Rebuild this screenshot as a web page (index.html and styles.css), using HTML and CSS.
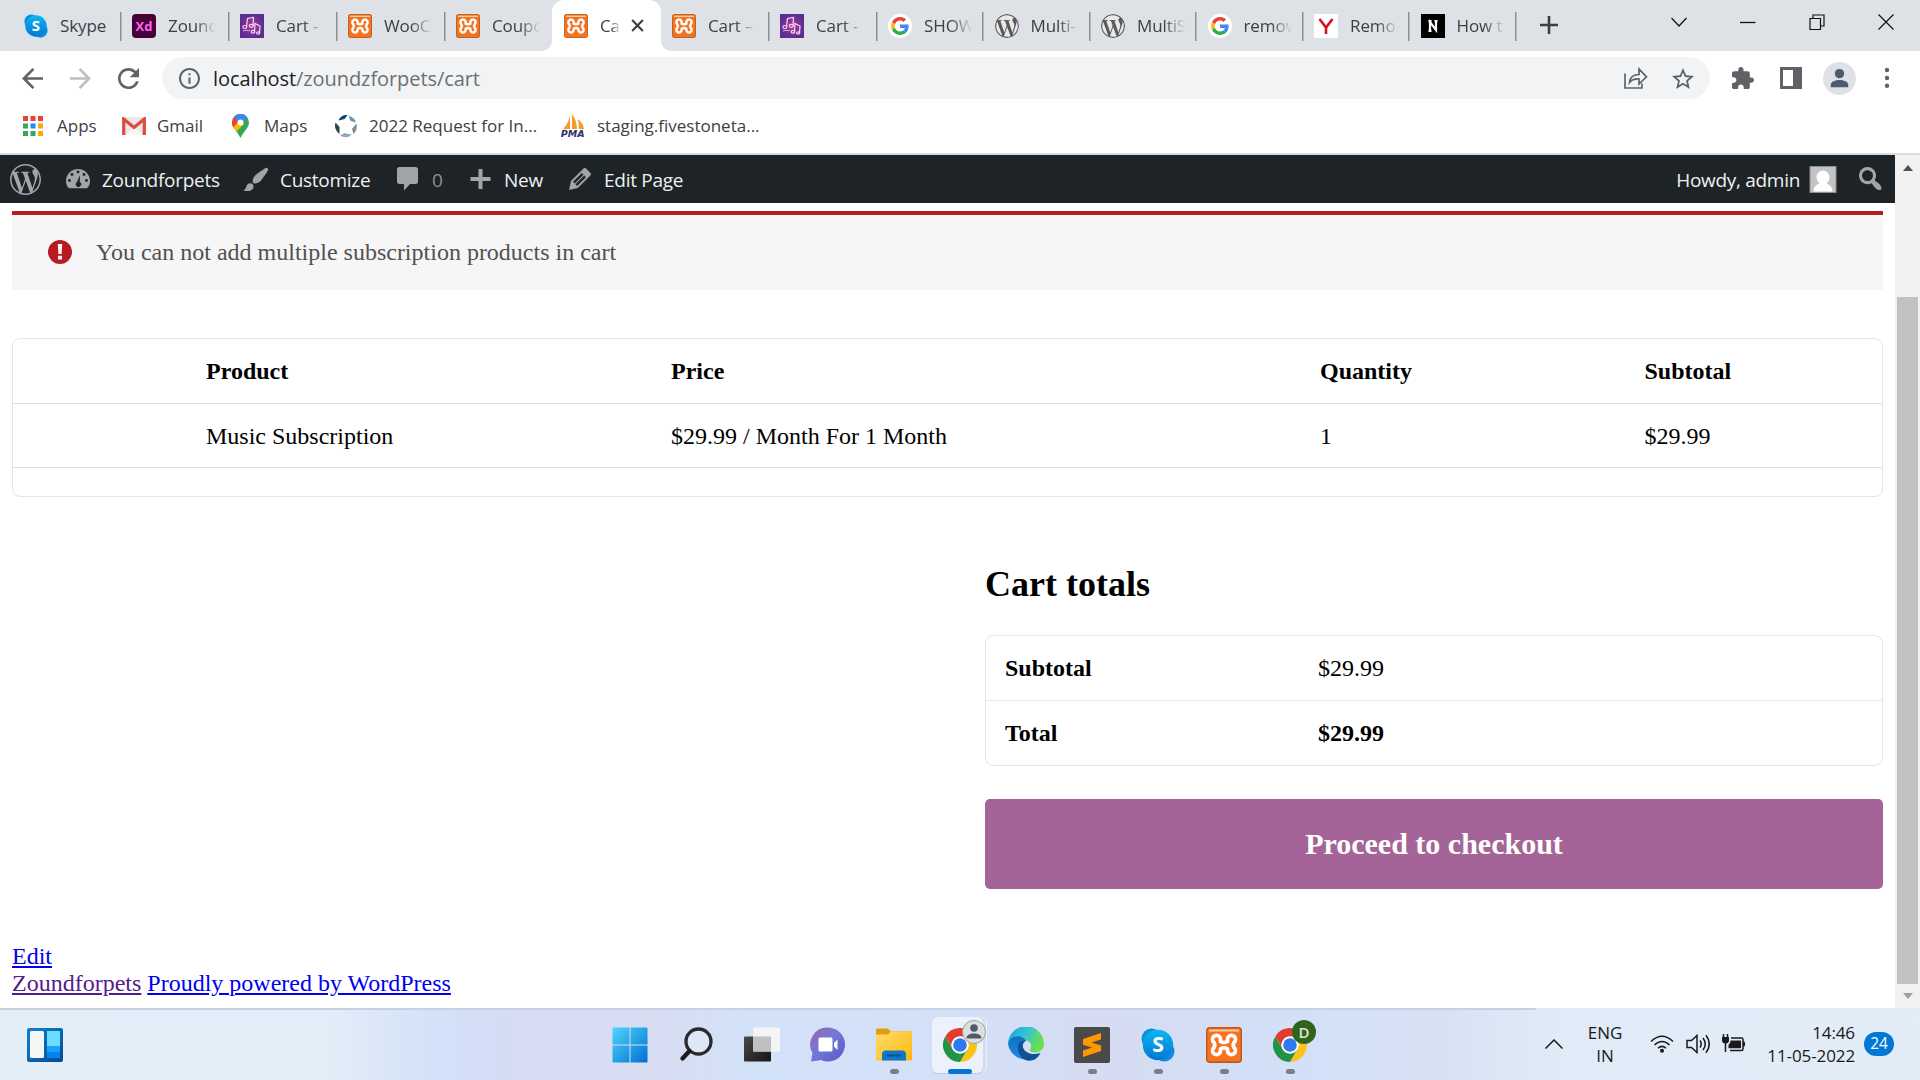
FILE: index.html
```html
<!DOCTYPE html>
<html lang="en">
<head>
<meta charset="utf-8">
<title>Cart – Zoundforpets</title>
<link rel="stylesheet" href="styles.css">
</head>
<body>
<svg class="sprite" aria-hidden="true">
  <defs>
    <linearGradient id="gSkype" x1="0" y1="0" x2="0" y2="1"><stop offset="0" stop-color="#0fb5f0"/><stop offset="1" stop-color="#0078d4"/></linearGradient>
    <linearGradient id="gStart" x1="0" y1="0" x2="1" y2="1"><stop offset="0" stop-color="#4fd5ff"/><stop offset="1" stop-color="#0070cf"/></linearGradient>
    <linearGradient id="gChat" x1="0" y1="0" x2="1" y2="1"><stop offset="0" stop-color="#9a64a8"/><stop offset=".45" stop-color="#7379d6"/><stop offset="1" stop-color="#5a56c4"/></linearGradient>
    <linearGradient id="gFolder" x1="0" y1="0" x2="1" y2="1"><stop offset="0" stop-color="#ffdb70"/><stop offset="1" stop-color="#fdb90a"/></linearGradient>
    <linearGradient id="gEdge" x1="0" y1="0" x2="1" y2=".4"><stop offset="0" stop-color="#1b9de2"/><stop offset=".5" stop-color="#35c1d6"/><stop offset="1" stop-color="#6be04e"/></linearGradient>
    <linearGradient id="gEdge2" x1="0" y1="0" x2="0" y2="1"><stop offset="0" stop-color="#1170c0"/><stop offset="1" stop-color="#1c8be0"/></linearGradient>
    <linearGradient id="gDark" x1="0" y1="0" x2="1" y2="1"><stop offset="0" stop-color="#4a4a4a"/><stop offset="1" stop-color="#151515"/></linearGradient>
    <linearGradient id="gWidget" x1="0" y1="0" x2="1" y2="1"><stop offset="0" stop-color="#0a84d8"/><stop offset="1" stop-color="#0a4a90"/></linearGradient>
    <radialGradient id="gMusic"><stop offset="0" stop-color="#b03a9c"/><stop offset="1" stop-color="#5a2d90"/></radialGradient>
    <symbol id="skype" viewBox="0 0 32 32"><circle cx="10" cy="10" r="9.500" fill="#0a8fe0"/><circle cx="22" cy="22" r="9.500" fill="#0f8ddd"/><circle cx="16" cy="16" r="14.300" fill="url(#gSkype)"/><text x="16" y="23" text-anchor="middle" font-family="Open Sans, sans-serif" font-weight="700" font-size="20" fill="#fff">S</text></symbol>
    <symbol id="xampp" viewBox="0 0 36 36"><rect x=".7" y=".7" width="34.600" height="34.600" rx="3" fill="#f57320" stroke="#b9591c" stroke-width="1.400"/><path d="M3 2.500h30v2H3z" fill="#ffc79a"/><path d="M14.500 14.500V12.500A4 4 0 1 0 8 15.500Q9.500 18 8 20.500A4 4 0 1 0 14.500 24V22Q18 19.700 21.500 22V24A4 4 0 1 0 28 20.500Q26.500 18 28 15.500A4 4 0 1 0 21.500 12.500V14.500Q18 16.500 14.500 14.500z" fill="none" stroke="#fff" stroke-width="3.700" stroke-linejoin="round"/></symbol>
    <symbol id="xd" viewBox="0 0 24 24"><rect width="24" height="24" rx="4" fill="#470137"/><text x="12" y="16.500" text-anchor="middle" font-family="Open Sans, sans-serif" font-weight="700" font-size="13" fill="#ff61f6">Xd</text></symbol>
    <symbol id="music" viewBox="0 0 24 24"><rect width="24" height="24" fill="url(#gMusic)"/><g stroke="#f3d9f5" stroke-width="1.200" fill="none"><path d="M6.500 13L7.500 4.500l6-1-.5 8M14.500 17.500l.5-8 5 2.500-.5 7"/><ellipse cx="4.800" cy="13" rx="2" ry="1.500"/><ellipse cx="11.300" cy="11.800" rx="2" ry="1.500"/><ellipse cx="13" cy="17.800" rx="1.800" ry="1.400"/><ellipse cx="18.200" cy="19" rx="1.600" ry="1.200"/><path d="M3 17c3-2 5 1 7-1" stroke-width=".8"/></g></symbol>
    <symbol id="google" viewBox="-8 -8 64 64"><circle cx="24" cy="24" r="32" fill="#fff"/><path fill="#ea4335" d="M24 9.500c3.540 0 6.710 1.220 9.210 3.600l6.850-6.850C35.900 2.380 30.470 0 24 0 14.620 0 6.510 5.380 2.560 13.220l7.980 6.190C12.430 13.720 17.740 9.500 24 9.500z"/><path fill="#4285f4" d="M46.980 24.550c0-1.570-.15-3.090-.38-4.550H24v9.020h12.940c-.58 2.960-2.260 5.480-4.780 7.180l7.730 6c4.510-4.180 7.090-10.360 7.090-17.650z"/><path fill="#fbbc05" d="M10.530 28.590c-.48-1.450-.76-2.990-.76-4.590s.27-3.140.76-4.590l-7.980-6.190C.92 16.460 0 20.120 0 24c0 3.880.92 7.540 2.560 10.780l7.970-6.190z"/><path fill="#34a853" d="M24 48c6.480 0 11.930-2.130 15.890-5.810l-7.730-6c-2.150 1.450-4.920 2.300-8.160 2.300-6.260 0-11.570-4.220-13.470-9.910l-7.980 6.190C6.510 42.620 14.620 48 24 48z"/></symbol>
    <symbol id="wp" viewBox="0 0 24 24"><path d="M21.469 6.825c.84 1.537 1.318 3.300 1.318 5.175 0 3.979-2.156 7.456-5.363 9.325l3.295-9.527c.615-1.540.820-2.771.820-3.864 0-.405-.026-.780-.070-1.110m-7.981.105c.647-.030 1.232-.105 1.232-.105.582-.075.514-.930-.067-.899 0 0-1.755.135-2.880.135-1.064 0-2.850-.150-2.850-.150-.585-.030-.661.855-.075.885 0 0 .540.061 1.125.090l1.680 4.605-2.370 7.080L5.354 6.900c.649-.030 1.234-.100 1.234-.100.585-.075.516-.930-.065-.896 0 0-1.746.138-2.874.138-.200 0-.438-.008-.690-.015C4.911 3.150 8.235 1.215 12 1.215c2.809 0 5.365 1.072 7.286 2.833-.046-.003-.091-.009-.141-.009-1.060 0-1.812.923-1.812 1.914 0 .890.513 1.643 1.060 2.531.411.720.890 1.643.890 2.977 0 .915-.354 1.994-.821 3.479l-1.075 3.585-3.900-11.610.001.014zM12 22.784c-1.059 0-2.081-.153-3.048-.437l3.237-9.406 3.315 9.087c.024.053.050.101.078.149-1.120.393-2.325.609-3.582.609M1.211 12c0-1.564.336-3.050.935-4.390L7.290 21.709C3.694 19.960 1.212 16.271 1.211 12M12 0C5.385 0 0 5.385 0 12s5.385 12 12 12 12-5.385 12-12S18.615 0 12 0"/></symbol>
    <symbol id="chrome" viewBox="0 0 48 48"><circle cx="24" cy="24" r="24" fill="#fff"/><path fill="#e33b2e" d="M3.200 12A24 24 0 0 1 44.800 12H24a12 12 0 0 0-10.400 18z"/><path fill="#fcc31e" d="M44.800 12A24 24 0 0 1 24 48l10.400-18A12 12 0 0 0 24 12z"/><path fill="#229342" d="M24 48A24 24 0 0 1 3.200 12l10.400 18a12 12 0 0 0 20.800 0z"/><circle cx="24" cy="24" r="12" fill="#fff"/><circle cx="24" cy="24" r="9.600" fill="#2d79ee"/></symbol>
  </defs>
</svg>

<header class="browser">
  <div class="tabstrip">
    <div class="tab"><svg class="fav"><use href="#skype"/></svg><span class="tab-title">Skype</span></div>
    <div class="tab"><svg class="fav"><use href="#xd"/></svg><span class="tab-title fade">Zound</span></div>
    <div class="tab"><svg class="fav"><use href="#music"/></svg><span class="tab-title fade">Cart - </span></div>
    <div class="tab"><svg class="fav"><use href="#xampp"/></svg><span class="tab-title fade">WooC</span></div>
    <div class="tab plain"><svg class="fav"><use href="#xampp"/></svg><span class="tab-title fade">Coupo</span></div>
    <div class="tab active"><svg class="fav"><use href="#xampp"/></svg><span class="tab-title fade">Ca</span><svg class="tab-close" viewBox="0 0 12 12"><path d="M1 1l10 10M11 1L1 11"/></svg></div>
    <div class="tab"><svg class="fav"><use href="#xampp"/></svg><span class="tab-title fade">Cart –</span></div>
    <div class="tab"><svg class="fav"><use href="#music"/></svg><span class="tab-title fade">Cart - </span></div>
    <div class="tab slim"><svg class="fav"><use href="#google"/></svg><span class="tab-title fade">SHOW</span></div>
    <div class="tab slim"><svg class="fav wp-fav"><use href="#wp"/></svg><span class="tab-title fade">Multi-</span></div>
    <div class="tab slim"><svg class="fav wp-fav"><use href="#wp"/></svg><span class="tab-title fade">MultiS</span></div>
    <div class="tab slim"><svg class="fav"><use href="#google"/></svg><span class="tab-title fade">remov</span></div>
    <div class="tab slim"><svg class="fav" viewBox="0 0 24 24"><rect width="24" height="24" fill="#fff"/><path d="M5.500 5l6.500 8.500L18.500 5M12 13v7" fill="none" stroke="#d3131e" stroke-width="2.600"/></svg><span class="tab-title fade">Remo</span></div>
    <div class="tab slim"><svg class="fav" viewBox="0 0 24 24"><rect width="24" height="24" fill="#000"/><path d="M9 17V8l6 8V7M7.500 7.200h3M7.500 16.800h3M13.500 7.200h3" fill="none" stroke="#fff" stroke-width="2.200"/></svg><span class="tab-title fade">How t</span></div>
    <svg class="new-tab" viewBox="0 0 18 18"><path d="M9 0v18M0 9h18"/></svg>
    <div class="window-controls">
      <svg viewBox="0 0 16 16"><path d="M.5 4l7.500 8 7.500-8"/></svg>
      <svg viewBox="0 0 16 16"><path d="M0 8.500h15.500" stroke-width="1.300"/></svg>
      <svg viewBox="0 0 16 16"><path d="M1 4.500h10.500v11H1zM4 4.500v-3.500h11v11h-3.500" /></svg>
      <svg viewBox="0 0 16 16"><path d="M.5.500l15 15M15.500.5l-15 15"/></svg>
    </div>
  </div>

  <div class="toolbar">
    <svg class="nav" viewBox="4 4 16 16"><path d="M20 11H7.830l5.590-5.590L12 4l-8 8 8 8 1.410-1.410L7.830 13H20v-2z"/></svg>
    <svg class="nav disabled" viewBox="4 4 16 16"><path d="M12 4l-1.410 1.410L16.170 11H4v2h12.170l-5.580 5.590L12 20l8-8z"/></svg>
    <svg class="nav" viewBox="4 4 16 16"><path d="M17.650 6.350C16.200 4.900 14.210 4 12 4c-4.420 0-7.990 3.580-7.990 8s3.570 8 7.990 8c3.730 0 6.840-2.550 7.730-6h-2.080c-.82 2.330-3.040 4-5.650 4-3.310 0-6-2.690-6-6s2.690-6 6-6c1.660 0 3.140.69 4.220 1.780L13 11h7V4l-2.350 2.350z"/></svg>
    <div class="address">
      <svg class="info" viewBox="2 2 20 20"><path d="M11 7h2v2h-2zm0 4h2v6h-2zm1-9C6.480 2 2 6.480 2 12s4.480 10 10 10 10-4.480 10-10S17.520 2 12 2zm0 18c-4.410 0-8-3.590-8-8s3.590-8 8-8 8 3.590 8 8-3.590 8-8 8z"/></svg>
      <span class="url"><b>localhost</b>/zoundzforpets/cart</span>
      <svg class="share" viewBox="0 0 24 22"><path d="M1 6.500V21h17v-4.500M5.500 15.500c.5-5 4-8 9.500-8V2l7.500 7.800L15 17v-5c-4-.3-7 .5-9.500 3.500z"/></svg>
      <svg class="star" viewBox="2 2 20 19"><path d="M22 9.240l-7.190-.62L12 2 9.190 8.630 2 9.240l5.460 4.730L5.820 21 12 17.270 18.180 21l-1.630-7.030L22 9.240zM12 15.400l-3.760 2.270 1-4.280-3.320-2.880 4.380-.38L12 6.100l1.710 4.040 4.380.38-3.320 2.880 1 4.280L12 15.400z"/></svg>
    </div>
    <svg class="ext" viewBox="2 1 21 21"><path d="M20.500 11H19V7c0-1.100-.9-2-2-2h-4V3.500C13 2.120 11.880 1 10.500 1S8 2.120 8 3.500V5H4c-1.100 0-1.990.9-1.990 2v3.800H3.500c1.490 0 2.700 1.210 2.700 2.700s-1.210 2.700-2.700 2.700H2V20c0 1.100.9 2 2 2h3.800v-1.500c0-1.490 1.210-2.700 2.700-2.700 1.490 0 2.700 1.210 2.700 2.700V22H17c1.100 0 2-.9 2-2v-4h1.500c1.380 0 2.500-1.120 2.500-2.500S21.880 11 20.500 11z"/></svg>
    <svg class="panel" viewBox="0 0 22 22"><path fill-rule="evenodd" d="M0 0h22v22H0zM3 3v16h10V3z"/></svg>
    <svg class="profile" viewBox="0 0 34 34"><circle cx="17" cy="17" r="17" fill="#dee1e6"/><circle cx="17" cy="12" r="4.800" fill="#4e5a73"/><path d="M8 26v-2.500c0-3.500 5-5 9-5s9 1.500 9 5V26z" fill="#4e5a73"/></svg>
    <svg class="menu" viewBox="0 0 6 22"><circle cx="3" cy="3" r="2.200"/><circle cx="3" cy="11" r="2.200"/><circle cx="3" cy="18.800" r="2.200"/></svg>
  </div>

  <nav class="bookmarks">
    <div class="bm bm-apps"><svg viewBox="0 0 20 20"><path fill="#ea4335" d="M0 0h5v5H0zM7.500 0h5v5h-5zM15 0h5v5h-5z"/><path fill="#34a853" d="M0 7.500h5v5H0zM0 15h5v5H0z"/><path fill="#1a8cff" d="M7.500 7.500h5v5h-5z"/><path fill="#fbab05" d="M15 7.500h5v5h-5zM15 15h5v5h-5z"/><path fill="#34a853" d="M7.500 15h5v5h-5z"/></svg><span>Apps</span></div>
    <div class="bm bm-gmail"><svg viewBox="0 0 24 18"><rect width="24" height="18" rx="1" fill="#e8e8e8"/><path d="M3 18l9-8 9 8" fill="#f7f7f7"/><path d="M1.700 18V2L12 10.500 22.300 2v16" fill="none" stroke="#dd4b3e" stroke-width="3.200"/></svg><span>Gmail</span></div>
    <div class="bm bm-maps"><svg viewBox="0 0 17 24"><path d="M8.500 0A8.500 8.500 0 0 0 0 8.500C0 14 5 16.500 8.500 24 12 16.500 17 14 17 8.500A8.500 8.500 0 0 0 8.500 0z" fill="#34a853"/><path d="M0 8.500A8.500 8.500 0 0 1 2.500 2.500L9 8l-7 6C.7 12.500 0 10.500 0 8.500z" fill="#ea4335"/><path d="M2.200 2.800A8.500 8.500 0 0 1 15.500 3.800L8.500 10z" fill="#4285f4"/><path d="M1.500 13L7 7l5 3-7.500 7.500Q2.500 15 1.500 13z" fill="#fbbc04"/><path d="M2.200 2.800A8.500 8.500 0 0 1 13.500 1.700L6.500 8z" fill="#4285f4"/><circle cx="8.500" cy="8.500" r="3" fill="#fff"/></svg><span>Maps</span></div>
    <div class="bm bm-req"><svg viewBox="0 0 24 24"><path d="M4.500 6.500Q7 .5 13.500 1L10.500 5Q7.500 5.500 4.500 6.500z" fill="#0b3f66"/><path d="M14.500 2Q20.500 3 22 8.500L16.500 7Q15.500 4.500 14.500 2z" fill="#6f93ab"/><path d="M22.500 9.500Q24 15.500 19.500 20L18 15Q20 12 22.500 9.500z" fill="#7b9097"/><path d="M18 20.500Q12.500 25.500 6 21.500L10.500 19Q14 20 18 20.500z" fill="#8fa9c4"/><path d="M5.500 20Q-.5 15.500 1.500 8.500L5.500 13Q5.500 16.500 5.500 20z" fill="#2a464e"/></svg><span>2022 Request for In...</span></div>
    <div class="bm bm-pma"><svg viewBox="0 0 24 24"><path d="M9 2v13H2q5-5 7-13zM11 0q5 7 5 15h-5zM17 5q5 4 6 10h-5z" fill="#f79a2b"/><text x="11.700" y="23" text-anchor="middle" font-family="DejaVu Sans, sans-serif" font-weight="700" font-style="italic" font-size="9.500" fill="#2d2f6e">PMA</text></svg><span>staging.fivestoneta...</span></div>
  </nav>
</header>

<div class="viewport">
  <div class="page">
    <div class="adminbar">
      <svg class="ab-wp"><use href="#wp"/></svg>
      <div class="ab-item ab-site"><svg viewBox="1 3 18 15"><path fill-rule="evenodd" d="M3.200 17.500h13.600C18.300 16 19 14 19 12c0-5-4-9-9-9s-9 4-9 9c0 2 .7 4 2.200 5.500zM10 4.200a1.100 1.100 0 1 1 0 2.200 1.100 1.100 0 0 1 0-2.200zM5.500 6a1.100 1.100 0 1 1 0 2.200 1.100 1.100 0 0 1 0-2.200zM14.500 6a1.100 1.100 0 1 1 0 2.200 1.100 1.100 0 0 1 0-2.200zM3.600 10.500a1.100 1.100 0 1 1 0 2.200 1.100 1.100 0 0 1 0-2.200zM16.400 10.500a1.100 1.100 0 1 1 0 2.200 1.100 1.100 0 0 1 0-2.200zM11.500 7.500l-.2 5.200a2 2 0 1 1-2.200.200z"/></svg><span>Zoundforpets</span></div>
      <div class="ab-item ab-cust"><svg viewBox="1 1.500 18 17"><path d="M18.330 3.570s.27-.8-.31-1.360c-.53-.52-1.220-.24-1.220-.24-.61.3-5.760 3.470-7.670 5.570-.86.96-2.060 3.790-1.090 4.820.92.98 3.960-.17 4.790-1 2.060-2.060 5.210-7.170 5.500-7.790zM1.400 17.650c2.370-1.560 1.460-3.410 3.230-4.640.93-.65 2.220-.62 3.080.29.63.67.8 2.570-.16 3.460-1.570 1.450-4 1.550-6.150.89z"/></svg><span>Customize</span></div>
      <div class="ab-item ab-comm"><svg viewBox="0 0 21 24"><path d="M2.500 0h16Q21 0 21 2.500v12q0 2.500-2.500 2.500H13l-6 6.500V17H2.500Q0 17 0 14.500v-12Q0 0 2.500 0z"/></svg><span>0</span></div>
      <div class="ab-item ab-new"><svg viewBox="0 0 20 20"><path d="M8 0h4v8h8v4h-8v8H8v-8H0V8h8z"/></svg><span>New</span></div>
      <div class="ab-item ab-edit"><svg viewBox="3 3 14 14"><path d="M13.890 3.390l2.710 2.720c.46.46.42 1.240.03 1.640l-8.010 8.020-5.560 1.160 1.160-5.580s7.600-7.630 7.990-8.030c.39-.39 1.220-.39 1.680.07zm-2.730 2.790l-5.590 5.610 1.110 1.110 5.540-5.650zm-2.970 8.230l5.580-5.600-1.070-1.080-5.590 5.600z"/></svg><span>Edit Page</span></div>
      <span class="howdy">Howdy, admin</span>
      <svg class="ab-avatar" viewBox="0 0 27 27"><rect x=".5" y=".5" width="26" height="26" fill="#c3c3c3" stroke="#8c8f94"/><path d="M4 25.500c0-5 3-7 6-8-2-2-3-4-3-6.500a6.500 6.500 0 0 1 13 0c0 2.500-1 4.500-3 6.500 3 1 6 3 6 8z" fill="#fff"/></svg>
      <svg class="ab-search" viewBox="3 2.500 15 15.500"><path d="M12.140 4.180c1.870 1.870 2.110 4.750.72 6.890.12.1.22.21.36.31.2.16.47.36.81.59.34.24.56.39.66.47.42.31.73.57.94.78.32.32.6.65.84 1 .25.35.44.69.59 1.040.14.35.21.68.18 1-.02.32-.14.59-.36.81s-.49.34-.81.36c-.31.02-.65-.04-.99-.19-.35-.14-.7-.34-1.040-.59-.35-.24-.68-.52-1-.84-.21-.21-.47-.52-.77-.93-.1-.13-.25-.35-.47-.66-.22-.32-.4-.57-.56-.78-.16-.2-.29-.35-.44-.5-2.070 1.090-4.690.76-6.440-.98-2.140-2.150-2.140-5.640 0-7.780 2.150-2.150 5.630-2.150 7.780 0zm-1.410 6.360c1.360-1.370 1.360-3.580 0-4.950-1.370-1.370-3.590-1.370-4.950 0-1.370 1.370-1.370 3.580 0 4.950 1.360 1.370 3.580 1.370 4.950 0z"/></svg>
    </div>

    <main class="content">
      <div class="notice"><svg viewBox="0 0 24 24"><circle cx="12" cy="12" r="12" fill="#b81c23"/><path d="M9.800 4h4.400l-.6 10h-3.200zM10 15.800h4v3.800h-4z" fill="#f6f5f6"/></svg><span>You can not add multiple subscription products in cart</span></div>

      <div class="cart-table">
        <div class="cart-row head"><span>Product</span><span>Price</span><span>Quantity</span><span>Subtotal</span></div>
        <div class="cart-row"><span>Music Subscription</span><span>$29.99 / Month For 1 Month</span><span>1</span><span>$29.99</span></div>
        <div class="cart-row empty"></div>
      </div>

      <section class="totals">
        <h2>Cart totals</h2>
        <div class="totals-table">
          <div class="totals-row"><b>Subtotal</b><span>$29.99</span></div>
          <div class="totals-row"><b>Total</b><b>$29.99</b></div>
        </div>
        <a class="checkout">Proceed to checkout</a>
      </section>

      <footer class="links">
        <div><a>Edit</a></div>
        <div><a class="visited">Zoundforpets</a> <a>Proudly powered by WordPress</a></div>
      </footer>
    </main>
  </div>
  <div class="scrollbar"><i class="up"></i><div class="thumb"></div><i class="down"></i></div>
</div>

<div class="taskbar">
  <svg class="widgets" viewBox="0 0 36 34"><rect width="36" height="34" rx="2" fill="url(#gWidget)"/><rect x="3" y="3" width="14" height="27" rx="1.500" fill="#f6f6f6"/><path d="M20 3h13v15H20z" fill="#69dcff"/><path d="M20 18h13v6H20z" fill="#1ba1fa"/><path d="M20 24h13v6H20z" fill="#0584ec"/></svg>
  <div class="apps">
    <div class="app"><svg class="i36" viewBox="0 0 36 36"><path d="M.5 1.500q0-1 1-1h16V17.500H.5zM18.500.5h16q1 0 1 1v16h-17zM.5 18.500h17v17h-16q-1 0-1-1zM18.500 18.500h17v16q0 1-1 1h-16z" fill="url(#gStart)"/></svg></div>
    <div class="app"><svg class="i36" viewBox="0 0 36 36"><circle cx="20.500" cy="14.500" r="12.500" fill="#dfe6f5" stroke="#2a2a2a" stroke-width="3.300"/><path d="M11.500 24L4.500 31.500" stroke="#1c1c1c" stroke-width="4.400" stroke-linecap="round"/></svg></div>
    <div class="app"><svg class="i36" viewBox="0 0 36 36"><rect y="9.500" width="27" height="25" rx="1" fill="url(#gDark)"/><rect x="9" y=".5" width="27" height="24" rx="1" fill="#f4f4f4"/><path d="M9 9.500h18v15H9z" fill="#c0c0c0"/></svg></div>
    <div class="app"><svg class="i36" viewBox="0 0 36 36"><path d="M18 .5a17 17 0 1 1-7 32.500L1 34.500 2.500 26A17 17 0 0 1 18 .5z" fill="url(#gChat)"/><rect x="8.500" y="10.500" width="14" height="14" rx="1.500" fill="#fff"/><path d="M24 16l3.500-3.500v10.500L24 19.500z" fill="#fff"/></svg></div>
    <div class="app run"><svg class="i36" viewBox="0 0 36 36"><path d="M0 3q0-1.500 1.500-1.500H12l3 3h20q1 0 1 1V10H0z" fill="#e0a10c"/><path d="M0 7.500h12l3-3h21v29H0z" fill="url(#gFolder)"/><path d="M6 33.500v-6q0-4 4-4h16q4 0 4 4v6z" fill="#1076c8"/><path d="M10.500 28.500h15" stroke="#0a4f92" stroke-width="2"/></svg></div>
    <div class="app current"><svg class="i34"><use href="#chrome"/></svg><svg class="who" viewBox="0 0 24 24"><circle cx="12" cy="12" r="11.500" fill="#dcdfe2" stroke="#9a9da1"/><circle cx="12" cy="8" r="3.800" fill="#4e5a68"/><path d="M4.500 18.500c0-3.500 3-5 7.500-5s7.500 1.500 7.500 5z" fill="#4e5a68"/></svg></div>
    <div class="app"><svg class="i36" viewBox="0 0 36 36"><path d="M0 18A18 18 0 0 1 36 16.500c0 6-4 9-9 9-4 0-5.500-1.500-5-3 2.500-3 1-9-5-9C9 13.500 0 13 0 18z" fill="url(#gEdge)"/><path d="M0 17C2 9 12 6 18 13.500c-3 .5-5 4-4 8 1.500 6 8 9 13 8.500A18 18 0 0 1 0 17z" fill="url(#gEdge2)"/><path d="M10 20c0-4 3.500-7.500 8-6-4 1.500-4.500 7 0 10.500 4.500 3.300 10 3 14.500 1.500C27 38 10 36 10 20z" fill="#114f96"/></svg></div>
    <div class="app run"><svg class="i36" viewBox="0 0 36 36"><rect width="36" height="36" rx="2" fill="#4a4a4a"/><path d="M9 12l18-6v6.500l-9.500 3 9.500 3V24L9 30v-6.500l9-3-9-2.700z" fill="#ff9800"/></svg></div>
    <div class="app run"><svg class="i34"><use href="#skype"/></svg></div>
    <div class="app run"><svg class="i36"><use href="#xampp"/></svg></div>
    <div class="app run"><svg class="i34"><use href="#chrome"/></svg><span class="who initial">D</span></div>
  </div>
  <div class="tray">
    <svg class="chev" viewBox="0 0 18 10"><path d="M.5 9.500L9 1l8.500 8.500"/></svg>
    <div class="lang"><span>ENG</span><span>IN</span></div>
    <svg class="wifi" viewBox="0 0 24 18"><path d="M1 6.500Q12-4 23 6.500M4.500 10Q12 3 19.500 10M8 13.300Q12 9.500 16 13.300"/><circle cx="12" cy="15.800" r="2" fill="#1a1a1a" stroke="none"/></svg>
    <svg class="sound" viewBox="0 0 24 20"><path d="M1 6.500h4.500L11 1.500v17l-5.500-5H1zM14 6.500q2.500 3.500 0 7M17 4q4.500 6 0 12M20 1.200q6.500 8.800 0 17.600"/></svg>
    <svg class="batt" viewBox="0 0 24 19"><path d="M9 4h10.500Q21 4 21 5.500V15q0 1.500-1.500 1.500H8M3.500 9v9M1.500 0v4M5.500 0v4"/><path d="M0 3h7v3.500Q7 9.500 3.500 9.500T0 6.500zM8.500 6.500h10.500V14.300H6.500v-3.500q2-1.300 2-4.300zM21 7.500h1.500q1.500 2.500 0 5H21z" fill="#1a1a1a" stroke="none"/></svg>
    <div class="clock"><span>14:46</span><span>11-05-2022</span></div>
    <span class="count">24</span>
  </div>
</div>
</body>
</html>
```
FILE: styles.css
```css
* { box-sizing: border-box; }
html, body { margin: 0; height: 100%; overflow: hidden; }
body {
  width: 1920px;
  height: 1080px;
  display: flex;
  flex-direction: column;
  background: #fff;
  color: #000;
  font-family: "Liberation Serif", serif;
}
svg { display: block; flex: none; }
.sprite { position: absolute; width: 0; height: 0; }

/* Browser chrome */
.browser {
  height: 155px;
  flex: none;
  border-bottom: 2px solid #d9dbdd;
  font-family: "Open Sans", "Noto Sans", sans-serif;
  color: #3c4043;
}
.tabstrip {
  height: 51px;
  display: flex;
  background: #dee1e6;
  padding-left: 14px;
}
.tab {
  width: 108px;
  flex: none;
  display: flex;
  align-items: center;
  padding-left: 10px;
  background: linear-gradient(#8b8e93, #8b8e93) right 1px top 12px / 1.500px 29px no-repeat;
}
.tab.slim { width: 106.500px; }
.tab.plain { background: none; }
.fav { width: 24px; height: 24px; }
.wp-fav { fill: #5a5a5a; background: #e9e9e9; border-radius: 50%; }
.tab-title {
  margin-left: 12px;
  width: 49px;
  font-size: 17px;
  letter-spacing: -0.100px;
  white-space: nowrap;
  overflow: hidden;
}
.fade { -webkit-mask-image: linear-gradient(90deg, #000 55%, transparent 98%); mask-image: linear-gradient(90deg, #000 55%, transparent 98%); }
.tab.active {
  position: relative;
  background: #fff;
  border-radius: 12px 12px 0 0;
  margin: 0 1px 0 -2px;
  padding-left: 12px;
  width: 109px;
}
.tab.active::before, .tab.active::after {
  content: "";
  position: absolute;
  bottom: 0;
  width: 10px;
  height: 10px;
}
.tab.active::before { left: -10px; background: radial-gradient(circle at 0 0, transparent 9.500px, #fff 10px); }
.tab.active::after { right: -10px; background: radial-gradient(circle at 100% 0, transparent 9.500px, #fff 10px); }
.tab.active .tab-title { width: 21px; }
.tab-close { width: 13px; height: 13px; margin-left: 10px; stroke: #3c4043; stroke-width: 2; fill: none; }
.new-tab { width: 18px; height: 18px; margin: 16px 0 0 23px; stroke: #3c4043; stroke-width: 2.600; }
.window-controls { display: flex; gap: 53px; margin: 14px 0 0 113px; }
.window-controls svg { width: 16px; height: 16px; fill: none; stroke: #111; stroke-width: 1.200; }

.toolbar { height: 54px; display: flex; align-items: center; padding-left: 22px; fill: #5f6368; }
.nav { width: 21px; height: 21px; margin-right: 27px; }
.nav.disabled { fill: #bcbec1; }
.address {
  width: 1548px;
  height: 42px;
  margin-left: -4px;
  padding-left: 17px;
  border-radius: 21px;
  background: #f1f3f4;
  display: flex;
  align-items: center;
}
.info { width: 21px; height: 21px; }
.url { flex: 1; margin-left: 13px; font-size: 20px; letter-spacing: -0.080px; color: #6b6f73; }
.url b { font-weight: 400; color: #202124; }
.share { width: 24px; height: 22px; fill: none; stroke: #5f6368; stroke-width: 1.700; }
.star { width: 22px; height: 21px; margin: 0 16px 0 24px; }
.ext { width: 22px; height: 22px; margin-left: 22px; }
.panel { width: 22px; height: 22px; margin-left: 26px; }
.profile { width: 33px; height: 33px; margin-left: 21px; }
.menu { width: 6px; height: 22px; margin-left: 28px; }

.bookmarks { height: 42px; display: flex; padding-left: 23px; font-size: 17px; }
.bm { display: flex; align-items: center; flex: none; white-space: nowrap; }
.bm span { margin-top: -2px; }
.bm svg { width: 24px; height: 24px; }
.bm-apps { width: 99px; }
.bm-apps svg { width: 20px; height: 20px; margin-right: 14px; }
.bm-gmail { width: 110px; }
.bm-gmail svg { height: 18px; margin-right: 11px; }
.bm-maps { width: 102px; }
.bm-maps svg { width: 17px; margin-right: 15px; }
.bm-req { width: 227px; }
.bm-req svg { margin-right: 11px; }
.bm-pma svg { margin-right: 12px; }

/* Page viewport */
.viewport { height: 853px; flex: none; display: flex; }
.page { width: 1895px; }
.adminbar {
  height: 48px;
  display: flex;
  align-items: center;
  padding: 0 12px 0 10px;
  background: #1d2327;
  color: #f0f0f1;
  fill: #a0a5aa;
  font: 19px "Open Sans", "Noto Sans", sans-serif;
  white-space: nowrap;
}
.adminbar span { margin-top: 1px; }
.ab-wp { width: 31px; height: 31px; margin-right: 25px; }
.ab-item { display: flex; align-items: center; flex: none; letter-spacing: -0.270px; }
.ab-site { width: 177px; }
.ab-site svg { width: 24px; height: 20px; margin-right: 12px; }
.ab-cust { width: 154px; }
.ab-cust svg { width: 26px; height: 25px; margin-right: 11px; }
.ab-comm { width: 73px; color: #8b9095; }
.ab-comm svg { width: 21px; height: 24px; margin-right: 14px; }
.ab-new { width: 99px; }
.ab-new svg { width: 21px; height: 20px; margin-right: 13px; }
.ab-edit svg { width: 22px; height: 22px; margin-right: 13px; }
.adminbar .howdy { margin-left: auto; letter-spacing: -0.300px; }
.ab-avatar { width: 28px; height: 27px; margin: 0 22px 0 9px; }
.ab-search { width: 24px; height: 24px; }

.content { padding: 8px 12px 0; font-size: 24px; line-height: 27px; }
.notice {
  height: 79px;
  display: flex;
  align-items: center;
  padding: 0 36px 2px;
  background: #f6f6f6;
  border-top: 4px solid #b81c23;
  color: #515151;
}
.notice svg { width: 24px; height: 24px; margin-right: 24px; }
.notice span { margin-top: 2px; }
.cart-table { height: 159px; margin-top: 48px; border: 1px solid #e5e5e5; border-radius: 8px; }
.cart-row {
  height: 64px;
  display: grid;
  grid-template-columns: 465px 649px 324.500px 1fr;
  align-items: center;
  padding: 1px 0 0 193px;
}
.cart-row + .cart-row { border-top: 1px solid #e0e0e0; }
.cart-row + .cart-row.empty { height: 29px; }
.head { font-weight: 700; }

.totals { width: 898px; margin: 66px 0 0 auto; }
h2 { margin: 0; font-size: 36px; line-height: 42px; }
.totals-table { height: 131px; margin-top: 30px; border: 1px solid #e5e5e5; border-radius: 8px; }
.totals-row { height: 64px; display: grid; grid-template-columns: 313px 1fr; align-items: center; padding: 1px 0 0 19px; }
.totals-row + .totals-row { height: 65px; border-top: 1px solid #e5e5e5; padding-top: 0; }
.checkout {
  display: flex;
  align-items: center;
  justify-content: center;
  height: 90px;
  margin-top: 33px;
  padding-bottom: 2px;
  border-radius: 5px;
  background: #a46497;
  color: #fff;
  font-size: 30px;
  font-weight: 700;
}
.links { margin-top: 54px; }
.links a { color: #0000ee; text-decoration: underline; }
.links a.visited { color: #551a8b; }

.scrollbar { width: 25px; display: flex; flex-direction: column; align-items: center; background: #f1f1f1; }
.up, .down { border: 5.500px solid transparent; }
.up { margin-top: 5px; border-bottom: 6px solid #505050; border-top-width: 5px; }
.thumb { width: 21px; height: 687px; margin-top: 126px; background: #c1c1c1; }
.down { margin-top: 9px; border-top: 6px solid #a0a0a0; }

/* Taskbar */
.taskbar {
  height: 72px;
  flex: none;
  display: flex;
  padding-left: 27px;
  font-family: "Open Sans", "Noto Sans", sans-serif;
  background:
    linear-gradient(#c6d0e3, #c6d0e3) 0 0 / 1536px 2px no-repeat,
    linear-gradient(90deg, #e3eef7 0, #e2edf8 330px, #d3e1f9 440px, #d5dcf4 510px, #d8ddf2 650px, #d2e2f9 760px, #d4e0f8 960px, #d6dcf1 1100px, #d2e0f8 1290px, #d9e2f4 1450px, #e0ebf7 1560px, #e2edf8 1920px);
}
.widgets { width: 36px; height: 34px; margin-top: 20px; }
.apps { display: flex; margin-left: 534px; }
.app { width: 66px; height: 72px; padding-top: 19px; display: flex; justify-content: center; position: relative; flex: none; }
.i36 { width: 36px; height: 36px; }
.i34 { width: 34px; height: 34px; margin-top: 1px; }
.app.run::after, .app.current::after {
  content: "";
  position: absolute;
  bottom: 6px;
  left: 29px;
  width: 9px;
  height: 5px;
  border-radius: 3px;
  background: #797e89;
}
.app.current::after { left: 21px; width: 24px; background: #0078d4; }
.app.current::before {
  content: "";
  position: absolute;
  left: 5px;
  top: 9px;
  width: 51px;
  height: 56px;
  border-radius: 6px;
  background: #edf1fb;
  box-shadow: 0 1px 1px #bfc8de, 4px 0 0 -1px #d6ddef, 5px 0 0 -1px #edf1fb;
}
.app.current svg { position: relative; }
.app .who, .app.current .who { position: absolute; left: 35px; top: 12px; width: 24px; height: 24px; }
.initial { border-radius: 50%; background: #2f641f; color: #dce8d2; font-size: 15px; font-weight: 600; line-height: 24px; text-align: center; }

.tray { display: flex; margin-left: auto; padding-right: 26px; color: #1a1a1a; font-size: 17px; line-height: 23px; }
.tray > svg { fill: none; stroke: #1a1a1a; stroke-width: 1.500; }
.chev { width: 18px; height: 10px; margin-top: 31px; }
.lang, .clock { display: flex; flex-direction: column; padding-top: 13px; letter-spacing: -0.100px; white-space: nowrap; }
.lang { width: 34px; margin-left: 25px; align-items: center; }
.wifi { width: 24px; height: 18px; margin: 27px 0 0 28px; }
.sound { width: 24px; height: 20px; margin: 26px 0 0 12px; }
.batt { width: 24px; height: 19px; margin: 26px 0 0 12px; }
.clock { width: 109px; align-items: flex-end; }
.count { width: 30px; height: 24px; margin: 24px 0 0 9px; border-radius: 12px; background: #0078d4; color: #fff; font-size: 15.500px; text-align: center; }
```
